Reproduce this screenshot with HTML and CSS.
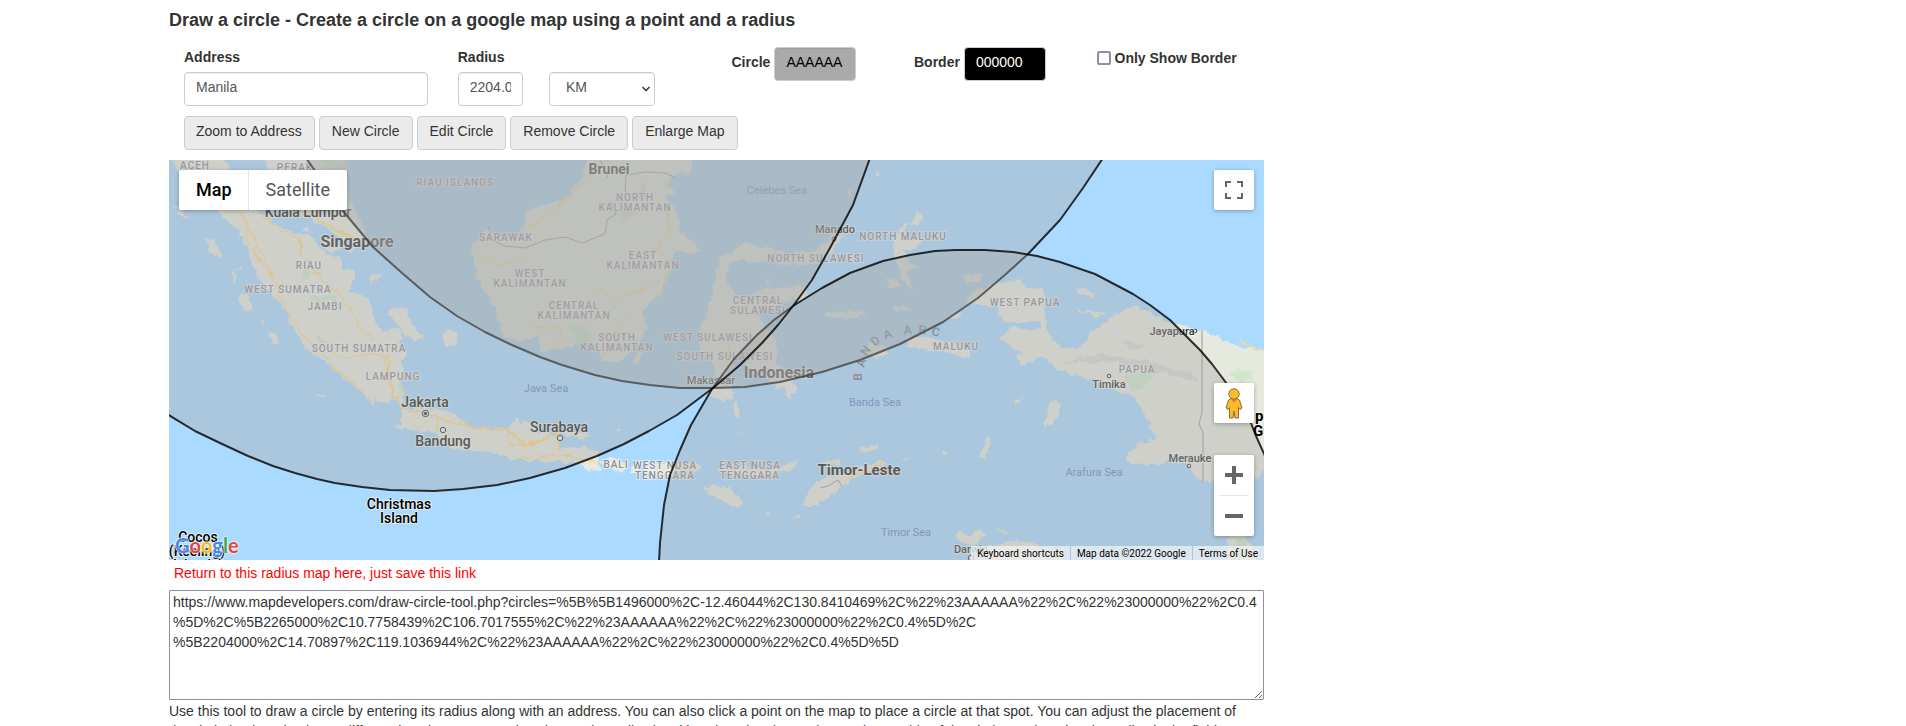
FILE: index.html
```html
<!DOCTYPE html>
<html lang="en">
<head>
<meta charset="utf-8">
<title>Draw a circle</title>
<link rel="stylesheet" href="styles.css">
</head>
<body>
<div class="container">
<main class="main">
  <h1 class="title">Draw a circle - Create a circle on a google map using a point and a radius</h1>
  <form class="form">
    <div class="grid">
      <div class="col span3">
        <label class="label" for="address">Address</label>
        <input class="control" id="address" type="text" value="Manila">
      </div>
      <div class="col span1">
        <label class="label" for="radius">Radius</label>
        <input class="control radius" id="radius" type="text" value="2204.000">
      </div>
      <div class="col span2 bottom">
        <span class="select-wrap">
          <select class="control unit" id="unit" aria-label="Unit"><option>KM</option><option>Miles</option></select>
          <svg class="chevron" viewBox="0 0 10 8" aria-hidden="true"><path d="M1.5 2 5 5.5 8.500 2"/></svg>
        </span>
      </div>
      <div class="col span2 inline">
        <label for="fill">Circle</label>
        <input class="control color grey" id="fill" type="text" value="AAAAAA">
      </div>
      <div class="col span2 inline">
        <label for="border">Border</label>
        <input class="control color black" id="border" type="text" value="000000">
      </div>
      <div class="col span2 check">
        <input class="tick" id="only" type="checkbox"><label for="only">Only Show Border</label>
      </div>
    </div>
    <div class="buttons">
      <button class="btn" type="button">Zoom to Address</button>
      <button class="btn" type="button">New Circle</button>
      <button class="btn" type="button">Edit Circle</button>
      <button class="btn" type="button">Remove Circle</button>
      <button class="btn" type="button">Enlarge Map</button>
    </div>
  </form>

  <div class="map">
    <svg class="canvas" viewBox="169 160 1095 400" preserveAspectRatio="xMidYMid slice" role="img" aria-label="Map of Indonesia with three circles">
      <defs>
        <filter id="coast" x="0" y="0" width="1" height="1">
          <feTurbulence type="fractalNoise" baseFrequency="0.12" numOctaves="3" seed="4" result="n"/>
          <feDisplacementMap in="SourceGraphic" in2="n" scale="8" xChannelSelector="R" yChannelSelector="G"/>
        </filter>
      </defs>
      <rect class="water" x="169" y="160" width="1095" height="400"/>
      <g class="land" filter="url(#coast)">
        <path d="M165 150H222L232 185 250 208 263 215 277 225 292 232 302 235 310 235 327 255 342 258 343 270 355 270 353 282 347 292 360 295 370 298 373 318 383 332 393 327 405 335 398 343 405 355 401 375 403 395 400 405 390 397 388 403 373 398 376 407 367 398 357 387 337 372 322 360 310 352 303 342 293 332 288 315 278 302 267 288 255 272 250 255 243 242 238 228 223 220 218 210 185 180Z"/>
        <path d="M265 150H348L345 175 349 200 360 220 366 237 362 246 345 240 325 228 300 214 280 205 268 180Z"/>
        <path d="M173 206 181 208 190 218 180 216ZM205 238 215 240 222 255 220 260 208 250ZM233 270 236 275 235 285 232 280ZM234 268h8v2h-8ZM238 294 248 297 253 312 246 311 240 302ZM260 318 265 322 262 325ZM268 330 274 333 280 346 272 341ZM317 393 324 394 323 398ZM302 226 310 226 309 232 302 231ZM320 238 338 238 340 250 332 254 324 248ZM347 247 356 246 352 253ZM372 273 382 276 370 286ZM387 313 393 307 407 308 408 316 411 326 421 333 424 340 414 341 402 330ZM444 330 457 331 457 344 446 345 442 338Z"/>
        <path d="M403 408 423 408 443 410 460 418 467 427 508 428 517 418 523 422 540 432 558 435 560 447 583 447 598 452 600 472 580 465 563 462 530 460 513 460 497 452 460 450 443 445 437 433 413 431 388 427 402 425Z"/>
        <path d="M562 431 590 434 585 439 566 437ZM599 459 613 458 627 465 617 472ZM632 464 640 463 639 473 632 472ZM643 467 657 464 670 462 681 466 697 462 703 468 697 473 657 477ZM717 468 730 465 752 468 777 470 790 462 798 458 795 467 777 476 730 475ZM702 488 717 486 732 490 743 502 738 507 727 504 717 497ZM802 507 808 492 813 483 830 477 857 467 880 462 888 464 863 475 842 487 820 504ZM858 450 877 444 878 449 862 453ZM815 463 840 459 840 464 818 466ZM790 520 801 512 800 518ZM616 429h6v2h-6ZM735 400h3v18h-3ZM739 433h4v2h-4ZM764 514 770 511 768 515Z"/>
        <path d="M472 255 475 242 488 228 497 237 520 235 526 220 527 210 563 200 583 178 588 150H690L694 170 673 177 667 185 675 192 665 198 673 205 680 218 678 230 693 242 701 252 673 253 672 265 667 278 660 295 643 310 645 328 638 345 620 362 603 362 597 345 580 342 563 348 540 352 537 335 522 342 503 338 500 322 495 312 490 298 482 288 477 272ZM635 350 641 352 638 364 634 362Z"/>
        <path d="M720 258 730 253 743 243 763 247 783 252 813 252 827 243 833 233 844 236 830 255 820 263 797 265 763 262 743 260 730 263 725 275 730 288 747 297 763 288 783 287 800 285 808 294 806 304 793 299 777 307 757 312 760 322 775 335 778 348 775 362 790 375 797 388 789 401 783 388 768 383 764 372 747 368 743 358 738 358 730 375 734 398 721 401 710 395 716 375 712 362 700 352 698 332 707 312 713 288ZM766 280 772 281 768 284ZM776 380 781 381 777 390Z"/>
        <path d="M892 248 898 232 908 222 903 240 922 240 915 250 903 250 908 262 922 268 905 270 915 290 903 280 897 262ZM917 212 922 216 917 226 912 223ZM877 168 880 172 877 182ZM848 187 853 193 850 196ZM825 313 840 311 857 312 867 315 850 318 828 317ZM893 305 910 308 905 312 894 310ZM960 275 980 274 981 280 965 283ZM867 345 883 345 888 352 877 359 867 354ZM907 338 920 337 950 342 968 350 971 359 957 355 933 350 907 347ZM950 314 962 313 960 318 951 317ZM886 279 897 280 900 288 890 288Z"/>
        <path d="M967 295 980 288 1000 282 1017 281 1030 288 1045 289 1045 305 1048 332 1057 345 1070 349 1082 347 1090 332 1103 325 1115 315 1133 306 1153 315 1170 322 1190 327 1207 332 1233 345 1270 352V462L1257 480 1240 476 1214 482 1202 482 1190 468 1187 463 1160 463 1127 464 1130 452 1140 442 1157 440 1150 425 1143 412 1133 397 1113 390 1093 380 1077 375 1060 372 1042 357 1030 363 1013 347 1000 337 1010 328 1043 330 1040 322 1003 322 997 308 968 303Z"/>
        <path d="M1074 287 1085 289 1096 296 1090 299ZM1077 310 1107 313 1098 316 1080 312ZM1045 427 1047 408 1055 397 1060 405 1059 417 1050 425ZM1014 403 1023 394 1016 408ZM980 458 984 445 990 435 990 444 984 458ZM943 451 949 452 946 456ZM903 457 912 459 904 460ZM957 541 958 530 970 536 980 529 986 535 978 545ZM975 570 983 548 1013 540 1033 543 1043 548 1064 548 1064 570ZM1225 570 1228 537 1243 535 1253 548 1257 570ZM1017 355 1030 358 1026 366 1020 364Z"/>
      </g>
      <g class="park" filter="url(#coast)">
        <path d="M320 160h27v12h-15ZM310 295h25v6h-22ZM300 270h10v8h-8ZM572 326h16l5 12-15 8ZM1124 372h30l-8 12-14 8ZM1228 371 1252 370 1253 380 1236 382ZM1234 537h10l4 12h-10ZM996 528 1010 533 1002 536ZM398 385h5v12ZM615 212h16l-8 8ZM366 395 376 407 367 400Z"/>
      </g>
      <g class="road" filter="url(#coast)">
        <path d="M200 176 225 200 242 216 260 250 274 280 284 305 300 332 320 350 335 368 365 392M262 216 285 232 300 238 302 255 320 278 345 300 360 328 380 345 388 375M322 348 345 358 375 352 388 360M243 216 246 240 275 282M475 255 500 266 528 255M530 228 560 205 590 175 610 158M668 180V230L656 252 670 260 662 290 655 300M598 288 610 298 640 292 660 282M535 327H560V350M603 362 608 340 628 318M415 428 430 420M437 433V415M460 418 470 428M508 430 510 445 540 440M520 458 560 455 598 462M725 370 730 345M843 482 880 464M1240 340 1263 353"/>
        <path class="highway" d="M281 205 310 215 340 232 360 240M388 355 390 385 402 408 425 413 455 423 470 428 508 430 525 445 545 440 558 432 560 450M298 238 302 255"/>
      </g>
      <path class="boundary" d="M488 226 492 240 505 246 525 248 545 240 565 237 582 243 605 234 607 220 616 214 611 202M600 160 608 178M625 192 626 175 645 172 665 173 676 178M820 488 828 486 838 480 842 486M1202 330V412L1199 424 1203 432V482"/>
      <g class="relief" filter="url(#coast)"><path d="M1060 362 1100 354 1140 360 1190 372 1200 382 1160 372 1110 362ZM1120 340 1145 345 1130 350ZM620 205l20 10-14 2ZM640 180l10 20-8-4ZM315 335l14 8-10 3Z"/></g>

      <g class="region">
        <text x="195" y="169">ACEH</text><text x="295" y="171">PERAK</text><text x="455" y="186">RIAU ISLANDS</text><text x="506" y="241">SARAWAK</text>
        <text x="530" y="277">WEST<tspan x="530" dy="10">KALIMANTAN</tspan></text>
        <text x="574" y="309">CENTRAL<tspan x="574" dy="10">KALIMANTAN</tspan></text>
        <text x="635" y="201">NORTH<tspan x="635" dy="10">KALIMANTAN</tspan></text>
        <text x="643" y="259">EAST<tspan x="643" dy="10">KALIMANTAN</tspan></text>
        <text x="617" y="341">SOUTH<tspan x="617" dy="10">KALIMANTAN</tspan></text>
        <text x="758" y="304">CENTRAL<tspan x="758" dy="10">SULAWESI</tspan></text>
        <text x="708" y="341">WEST SULAWESI</text><text x="725" y="360">SOUTH SULAWESI</text><text x="816" y="262">NORTH SULAWESI</text>
        <text x="903" y="240">NORTH MALUKU</text><text x="1025" y="306">WEST PAPUA</text><text x="956" y="350">MALUKU</text><text x="1137" y="373">PAPUA</text>
        <text x="309" y="269">RIAU</text><text x="288" y="293">WEST SUMATRA</text><text x="325" y="310">JAMBI</text><text x="359" y="352">SOUTH SUMATRA</text><text x="393" y="380">LAMPUNG</text>
        <text x="616" y="468">BALI</text>
        <text x="665" y="469">WEST NUSA<tspan x="665" dy="10">TENGGARA</tspan></text>
        <text x="750" y="469">EAST NUSA<tspan x="750" dy="10">TENGGARA</tspan></text>
      </g>
      <g class="arc">
        <text transform="translate(862 377) rotate(-88)">B</text><text transform="translate(865 364) rotate(-75)">A</text><text transform="translate(869 353) rotate(-55)">N</text><text transform="translate(878 344) rotate(-40)">D</text><text transform="translate(889 338) rotate(-20)">A</text><text transform="translate(908 334) rotate(-4)">A</text><text transform="translate(922 334) rotate(4)">R</text><text transform="translate(935 336) rotate(10)">C</text>
      </g>
      <g class="sea"><text x="777" y="194">Celebes Sea</text><text x="546" y="392">Java Sea</text><text x="875" y="406">Banda Sea</text><text x="906" y="536">Timor Sea</text><text x="1094" y="476">Arafura Sea</text></g>
      <g class="dot"><circle cx="425.500" cy="413.500" r="3.200"/><circle class="core" cx="425.500" cy="413.500" r="1.200"/><circle cx="443" cy="430" r="2.700"/><circle cx="560" cy="438" r="2.700"/><circle cx="834" cy="239" r="2"/><circle cx="1195" cy="331" r="1.800"/><circle cx="1109" cy="376" r="1.800"/><circle cx="1189" cy="466" r="1.800"/><circle cx="971" cy="558" r="2.700"/></g>
      <g class="city"><text x="308" y="217">Kuala Lumpur</text><text x="425" y="407">Jakarta</text><text x="443" y="446">Bandung</text><text x="559" y="432">Surabaya</text></g>
      <g class="town"><text x="711" y="384">Makassar</text><text x="835" y="233">Manado</text><text x="1172" y="335">Jayapura</text><text x="1109" y="388">Timika</text><text x="1190" y="462">Merauke</text><text x="971" y="553">Darwin</text></g>
      <g class="major"><text x="357" y="247">Singapore</text><text x="779" y="378">Indonesia</text></g>
      <g class="country"><text x="859" y="475">Timor-Leste</text></g>
      <g class="brunei"><text x="609" y="174">Brunei</text></g>
      <g class="island"><text x="399" y="509">Christmas<tspan x="399" dy="14">Island</tspan></text><text x="198" y="542">Cocos<tspan x="197" dy="14">(Keeling)</tspan><tspan x="198" dy="14">Islands)</tspan></text></g>
      <g class="png"><text x="1255" y="421">pua</text><text x="1253" y="436">Guinea</text></g>

      <path class="disc" d="M306 158 343 211 373 247 402 273 430 297 457 316 485 332 512 345 540 357 562 365 595 375 622 381 650 385 680 388 712 388 745 387 780 382 822 372 860 360 900 344 943 322 978 298 1006 274 1028 254 1060 220 1083 188 1103 158"/>
      <path class="disc" d="M659 562 660 543 664 505 670 475 680 450 691 425 712 389 734 359 757 335 774 320 793 306 822 288 850 273 883 261 910 255 935 251 955 250 985 250 1013 252 1037 256 1060 262 1095 274 1133 294 1150 305 1170 320 1200 350 1212 364 1230 388 1249 418 1256 436 1266 458V562"/>
      <path class="disc" d="M167 158V414L195 431 220 443 248 456 273 466 295 473 317 479 335 483 362 487 390 490 434 491 463 489 497 485 530 478 565 468 597 456 624 444 649 431 677 415 713 388 740 365 762 343 778 325 793 306 812 280 830 248 853 205 870 158"/>
    </svg>

    <div class="types">
      <button class="type active" type="button">Map</button>
      <button class="type" type="button">Satellite</button>
    </div>
    <button class="tool full" type="button" aria-label="Toggle fullscreen">
      <svg viewBox="0 0 18 18"><path d="M0 0v6h2V2h4V0ZM18 0h-6v2h4v4h2ZM18 18v-6h-2v4h-4v2ZM2 12H0v6h6v-2H2Z"/></svg>
    </button>
    <div class="side">
      <button class="tool" type="button" aria-label="Street View">
        <svg class="pegman" viewBox="0 0 18 31"><path d="M6 10.500h6l2.500 1.500L17 20l-2 1.500-1.500-2V30h-3.500l-1-7-1 7H4.500V19.500l-1.500 2L1 20l2.500-8Z"/><path class="scarf" d="M5.500 11h7L9 15Z"/><circle cx="9" cy="6" r="5.200"/></svg>
      </button>
      <div class="zoom">
        <button class="tool flat" type="button" aria-label="Zoom in"><svg viewBox="0 0 18 18"><path d="M7 0h4v7h7v4h-7v7H7v-7H0V7h7Z"/></svg></button>
        <button class="tool flat" type="button" aria-label="Zoom out"><svg viewBox="0 0 18 18"><path d="M0 7h18v4H0Z"/></svg></button>
      </div>
    </div>
    <a class="logo" href="#" aria-label="Google"><span class="b">G</span><span class="r">o</span><span class="y">o</span><span class="b">g</span><span class="g">l</span><span class="r">e</span></a>
    <div class="legal"><a href="#">Keyboard shortcuts</a><span>Map data ©2022 Google</span><a href="#">Terms of Use</a></div>
  </div>

  <label class="save" for="link">Return to this radius map here, just save this link</label>
  <textarea class="link" id="link" spellcheck="false">https://www.mapdevelopers.com/draw-circle-tool.php?circles=%5B%5B1496000%2C-12.46044%2C130.8410469%2C%22%23AAAAAA%22%2C%22%23000000%22%2C0.4
%5D%2C%5B2265000%2C10.7758439%2C106.7017555%2C%22%23AAAAAA%22%2C%22%23000000%22%2C0.4%5D%2C
%5B2204000%2C14.70897%2C119.1036944%2C%22%23AAAAAA%22%2C%22%23000000%22%2C0.4%5D%5D</textarea>
  <p class="help">Use this tool to draw a circle by entering its radius along with an address. You can also click a point on the map to place a circle at that spot. You can adjust the placement of the circle by dragging it to a different location. You can also change the radius by either dragging the marker on the outside of the circle, or changing the radius in the field</p>
</main>
</div>
</body>
</html>
```
FILE: styles.css
```css
* { box-sizing: border-box; }
body {
  margin: 0;
  height: 100vh;
  overflow: hidden;
  background: #fff;
  color: #333;
  font: 14px/20px "Liberation Sans", Arial, sans-serif;
}
.container { max-width: 1568px; margin: 0 auto; }
.main { max-width: 1095px; padding-top: 10px; }
.title { margin: 0 0 17px; font-size: 18px; line-height: 20px; font-weight: 700; }
label { font-weight: 700; }

.grid { display: grid; grid-template-columns: repeat(12, minmax(0, 1fr)); }
.col { padding-left: 15px; }
.span1 { grid-column: span 1; }
.span2 { grid-column: span 2; }
.span3 { grid-column: span 3; padding-right: 15px; }
.label { display: block; margin-bottom: 5px; padding-right: 0; line-height: 20px; }
.control {
  display: block;
  width: 100%;
  height: 34px;
  padding: 3px 11px 7px;
  border: 1px solid #ccc;
  border-radius: 4px;
  background: #fff;
  color: #555;
  font: inherit;
  box-shadow: inset 0 1px 1px rgba(0, 0, 0, .075);
}
.radius { width: 65px; }
.bottom { display: flex; align-items: flex-end; }
.select-wrap { display: grid; width: 106px; align-items: center; }
.select-wrap > * { grid-area: 1 / 1; }
.unit { appearance: none; padding-left: 16px; }
.chevron { justify-self: end; width: 10px; height: 8px; margin-right: 4px; fill: none; stroke: #333; stroke-width: 1.5; pointer-events: none; }
.inline { display: flex; align-items: flex-start; gap: 4px; }
.inline label { padding-top: 5px; }
.color { width: 82px; }
.grey { background: #aaa; color: #000; }
.black { background: #000; color: #fff; }
.check { display: flex; align-items: flex-start; gap: 4px; }
.tick { appearance: none; width: 14px; height: 14px; margin: 4px 0 0; border: 2px solid #8f8f9d; border-radius: 2px; background: #fff; }
.check label { padding-top: 1px; white-space: nowrap; }
.buttons { display: flex; flex-wrap: wrap; gap: 4px; padding: 10px 15px; }
.btn { height: 34px; padding: 3px 12px 7px 11px; border: 1px solid #ccc; border-radius: 4px; background: #ebebeb; color: #333; font: inherit; }
.btn + .btn { padding-left: 12px; }

.map { position: relative; height: 400px; overflow: hidden; background: #aadaff; font-family: Roboto, sans-serif; }
.canvas { display: block; width: 100%; height: 100%; }
.water { fill: #aadaff; }
.land { fill: #e6e9de; }
.park { fill: #cfe8cc; }
.relief { fill: #d8dbd3; }
.road { fill: none; stroke: #ffd880; stroke-width: 1.3; }
.highway { stroke-width: 2.2; }
.boundary { fill: none; stroke: #9a9a9f; stroke-width: 1; }
.disc { fill: #aaa; fill-opacity: .4; stroke: #000; stroke-opacity: .8; stroke-width: 2; stroke-linejoin: round; }
.canvas text { text-anchor: middle; paint-order: stroke; stroke: #f3f4f0; stroke-opacity: .75; stroke-width: 2px; stroke-linejoin: round; }
.region { font-size: 10px; font-weight: 500; letter-spacing: 1px; fill: #8c8c94; }
.canvas .arc text { font-size: 12px; font-weight: 500; fill: #77777f; stroke: none; }
.canvas .sea text { font-size: 11px; fill: #6689c8; stroke: none; }
.city { font-size: 14px; font-weight: 500; fill: #222; }
.town { font-size: 11px; font-weight: 500; fill: #333; }
.major { font-size: 16px; font-weight: 700; fill: #333; }
.country { font-size: 15px; font-weight: 700; fill: #222; }
.brunei { font-size: 14px; font-weight: 700; fill: #333; }
.island { font-size: 14px; font-weight: 500; fill: #000; }
.canvas .png text { font-size: 15px; font-weight: 700; fill: #000; text-anchor: start; }
.dot { fill: #eee; stroke: #333; stroke-width: 1; }
.core { fill: #222; }

.types { position: absolute; top: 10px; left: 10px; display: flex; border-radius: 2px; background: #fff; box-shadow: 0 1px 4px rgba(0, 0, 0, .3); }
.type { height: 40px; padding: 0 17px; border: 0; border-left: 1px solid #e6e6e6; background: none; color: #565656; font: 18px/20px Roboto, sans-serif; }
.type.active { padding-right: 16px; border-left: 0; color: #000; font-weight: 500; }
.tool { display: grid; place-items: center; width: 40px; height: 40px; padding: 0; border: 0; border-radius: 2px; background: #fff; box-shadow: 0 1px 4px rgba(0, 0, 0, .3); }
.tool svg { width: 18px; height: 18px; fill: #666; }
.full { position: absolute; top: 10px; right: 10px; }
.side { position: absolute; right: 10px; bottom: 24px; display: grid; gap: 32px; }
.zoom { border-radius: 2px; background: #fff; box-shadow: 0 1px 4px rgba(0, 0, 0, .3); }
.flat { box-shadow: none; background: none; }
.flat + .flat { background: linear-gradient(#e6e6e6, #e6e6e6) 5px 0 / 30px 1px no-repeat; height: 41px; }
.tool .pegman { width: 18px; height: 31px; fill: #fbbc2c; stroke: #8a6d3b; stroke-width: 1; }
.pegman .scarf { fill: #e8853a; stroke: none; }
.logo { position: absolute; left: 6px; bottom: 3px; font: 700 20px/24px Lato, sans-serif; text-decoration: none; text-shadow: 0 0 1px #fff, 0 0 2px #fff, 0 0 2px #fff; }
.b { color: #4285f4; }
.r { color: #ea4335; }
.y { color: #fbbc05; }
.g { color: #34a853; }
.legal { position: absolute; right: 0; bottom: 0; display: flex; gap: 1px; font-size: 10px; line-height: 13px; color: #000; }
.legal > * { padding: 1px 6px 0; background: rgba(245, 245, 245, .7); color: inherit; text-decoration: none; }

.save { display: block; padding: 3px 5px 7px; font-weight: 400; color: #f00; }
.link { display: block; width: 100%; height: 110px; margin: 0; padding: 1px 3px; border: 1px solid #8f8f9d; border-radius: 1px; background: #fff; color: #333; font: inherit; resize: vertical; }
.help { margin: 1px 0 0; padding-right: 20px; }
```
